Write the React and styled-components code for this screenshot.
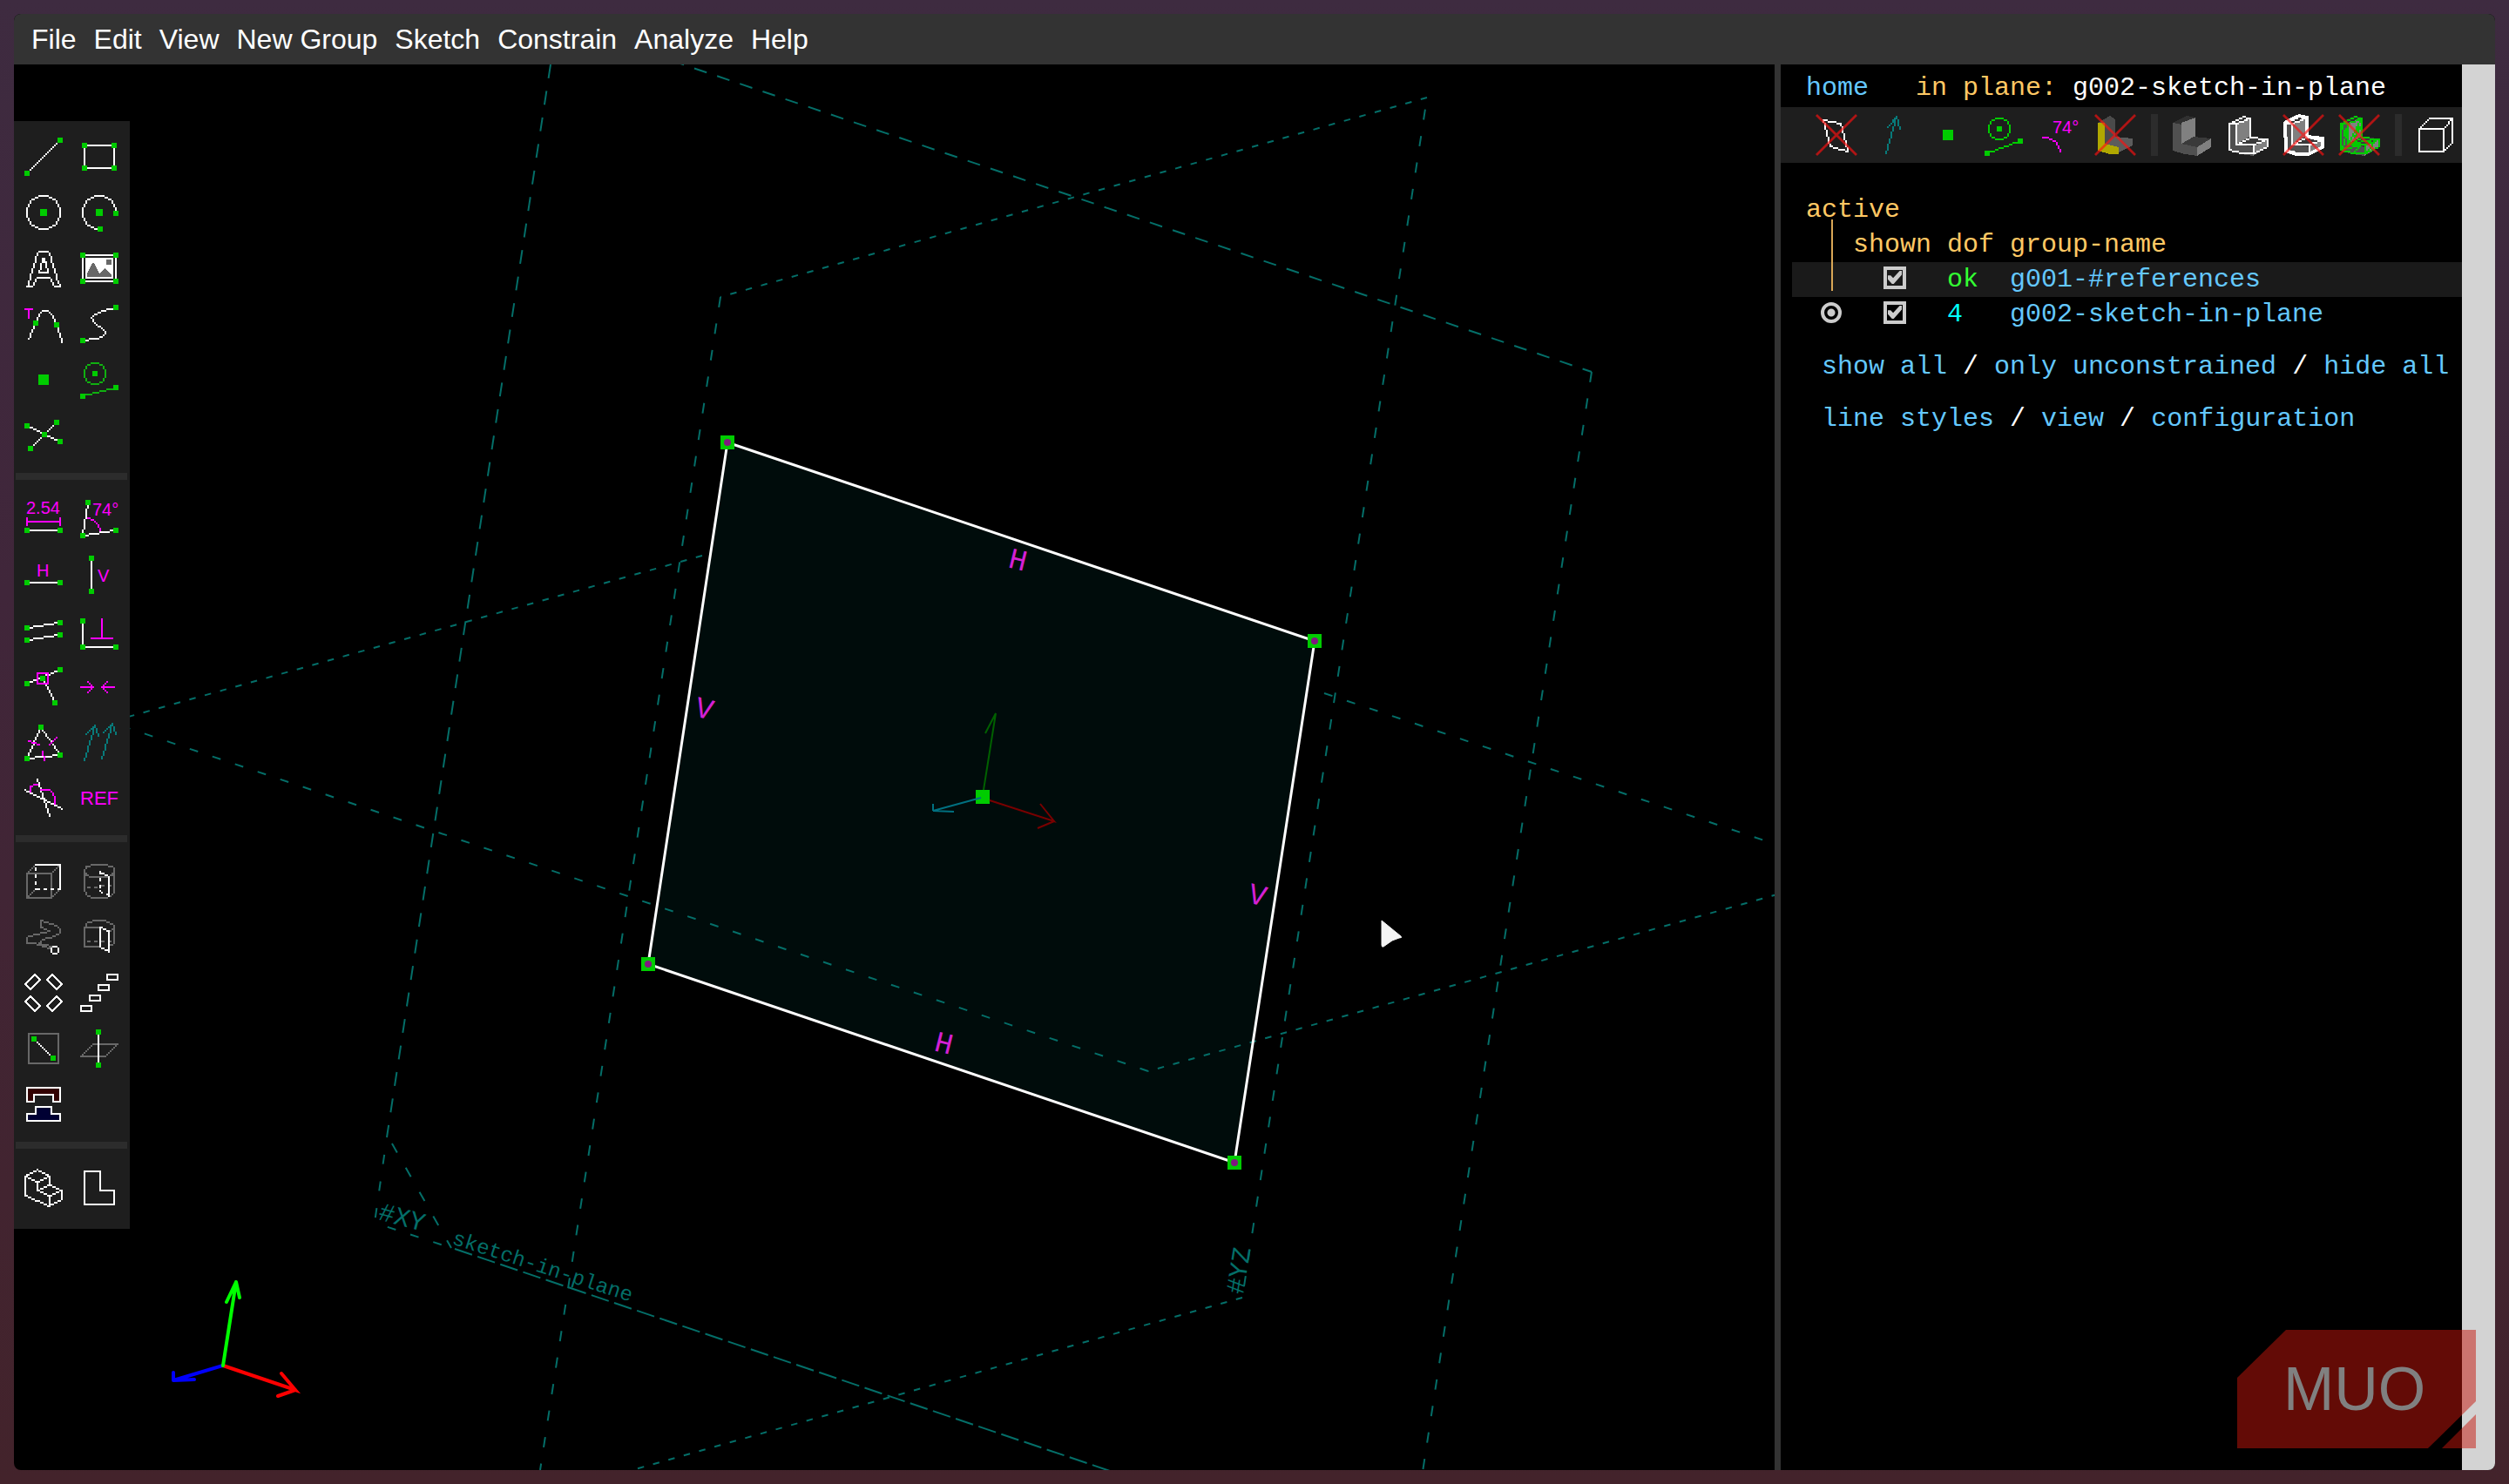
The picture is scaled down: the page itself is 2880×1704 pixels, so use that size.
import styled, { createGlobalStyle } from "styled-components";

const WHITE = "#ffffff";
const GREEN = "#00cc00";
const PINK = "#ff00ff";
const GRAY = "#686868";
const TEAL = "#087a7a";
const PLANE = "#046e68";

// every grid cell a straight line passes through
const lineCells = ([x0, y0], [x1, y1]) => {
  const steps = Math.max(Math.abs(x1 - x0), Math.abs(y1 - y0), 1);
  return Array.from({ length: steps + 1 }, (_, i) => [
    Math.round(x0 + ((x1 - x0) * i) / steps),
    Math.round(y0 + ((y1 - y0) * i) / steps),
  ]);
};

const ringCells = (cx, cy, r, from, to) => {
  const cells = [];
  const start = Number.isInteger(cx) ? 0 : 0.5;
  for (let d = start; d <= r * 0.72; d += 1) {
    const e = Math.sqrt(r * r - d * d);
    const far = Math.round(e - start) + start;
    [-1, 1].forEach((a) =>
      [-1, 1].forEach((b) => {
        cells.push([cx + a * d, cy + b * far], [cx + a * far, cy + b * d]);
      }),
    );
  }
  return cells.filter(([x, y]) => {
    const angle = (Math.atan2(y - cy, x - cx) * 180) / Math.PI;
    return angle >= from && angle <= to;
  });
};

const Cells = ({ cells, c }) => (
  <path fill={c} d={cells.map(([x, y]) => `M${x} ${y}h1v1h-1z`).join("")} />
);

const Line = ({ p, c = WHITE, dash, closed }) => {
  const points = p.split(" ").map((pair) => pair.split(",").map(Number));
  if (closed) points.push(points[0]);
  const cells = points
    .slice(1)
    .flatMap((point, i) => lineCells(points[i], point));
  return (
    <Cells
      c={c}
      cells={dash ? cells.filter((_, i) => i % 4 < 2) : cells}
    />
  );
};

const Ring = ({ x, y, r, c = WHITE, from = -180, to = 180 }) => (
  <Cells c={c} cells={ringCells(x, y, r, from, to)} />
);

const Dots = ({ p, c = GREEN }) =>
  p.split(" ").map((pair) => {
    const [x, y] = pair.split(",").map(Number);
    return (
      <rect key={pair} x={x - 1} y={y - 1} width="3" height="3" fill={c} />
    );
  });

const Mark = ({ x, y, size = 10, children }) => (
  <IconText x={x} y={y} fontSize={size}>
    {children}
  </IconText>
);

const Cross = () => (
  <path
    d="M0.5 0.5 23.5 23.5M23.5 0.5 0.5 23.5"
    stroke="#ff1010"
    strokeOpacity="0.65"
    strokeWidth="1.4"
    shapeRendering="auto"
  />
);

const Bracket = () => (
  <>
    <path fill="#505050" d="M1 5 6 6v11l9 2v5l-7-1-7-2z" />
    <path fill="#303030" d="M1 5 9 1l5 1-8 4z" />
    <path fill="#808080" d="M6 5 14 2v11l-8 4z" />
    <path fill="#3a3a3a" d="M6 17l7-4 10 1-8 5z" />
    <path fill="#808080" d="M15 19l8-5v5l-8 5z" />
  </>
);

const BracketEdges = ({ c }) => (
  <>
    <Line c={c} p="1,5 9,1 13,2 13,13" />
    <Line c={c} p="1,5 5,5 13,2" />
    <Line c={c} p="1,5 1,20 8,22 15,22 23,18 23,14 13,13 5,17 5,5" />
    <Line c={c} p="5,17 15,17 23,14" />
    <Line c={c} p="15,17 15,22" />
  </>
);

const drawTools = [
  ["Line segment", <><Line p="2,21 21,2" /><Dots p="2,21 21,2" /></>],
  ["Rectangle", <><Line closed p="3,5 20,5 20,18 3,18" /><Dots p="3,5 20,5 20,18 3,18" /></>],
  ["Circle", <><Ring x={11.5} y={11.5} r={9.6} /><rect x="10" y="10" width="4" height="4" fill={GREEN} /></>],
  ["Arc", <><Ring x={11.5} y={11.5} r={9.6} from={-180} to={0} /><Ring x={11.5} y={11.5} r={9.6} from={90} to={180} /><rect x="10" y="10" width="4" height="4" fill={GREEN} /><Dots p="21,12 12,21" /></>],
  ["Text in TrueType font", <><Line closed p="2,22 5,22 8,17 15,17 18,22 21,22 20,20 15,3 14,2 9,2 8,3 3,20" /><Line closed p="11,6 9,14 14,14 12,6" /><rect x="11" y="6" width="2" height="3" fill={WHITE} /></>],
  ["Image", <><Line closed p="2,4 21,4 21,19 2,19" /><rect x="4" y="6" width="16" height="12" fill={WHITE} /><path fill={GRAY} d="M5 17v-2l3-6h1l3 6 3-3 4 4v1zM16 7h3v3h-3z" /><Dots p="2,4 21,4 21,19 2,19" /></>],
  ["Tangent arc", <><Line p="3,20 4,18 7,10 9,6 11,4 14,4 16,6 19,12 21,18 22,22" /><Line c={PINK} p="1,3 5,3" /><Line c={PINK} p="3,3 3,8" /><Dots p="7,11 19,12" /></>],
  ["Cubic spline", <><Line p="21,2 14,4 9,6 7,8 8,10 14,15 15,17 13,19 9,20 2,21" /><Dots p="21,2 2,21" /></>],
  ["Datum point", <rect x="9" y="9" width="6" height="6" fill={GREEN} />],
  ["Toggle construction", <><Ring c="#10b010" x={9} y={8} r={6.2} /><Line c="#10b010" p="2,21 21,16" /><Dots p="9,8 2,21 21,16" /></>],
  ["Split curves", <><Line p="2,6 21,15" /><Line p="4,19 19,4" /><Dots p="2,6 19,4 12,11 21,15 4,19" /></>],
];

const constrainTools = [
  ["Distance", <><Mark x="2" y="9">2.54</Mark><Line c={PINK} p="2,13 21,13" /><Line c={PINK} p="2,11 2,15" /><Line c={PINK} p="21,11 21,15" /><Line p="2,18 21,18" /><Dots p="2,18 21,18" /></>],
  ["Angle", <><Line p="5,2 2,21 21,18" /><Ring c={PINK} x={2} y={21} r={10.6} from={-74} to={-12} /><Mark x="8" y="10">74°</Mark><Dots p="5,2 2,21 21,18" /></>],
  ["Horizontal", <><Mark x="8" y="13">H</Mark><Line p="2,16 21,16" /><Dots p="2,16 21,16" /></>],
  ["Vertical", <><Line p="7,2 7,21" /><Mark x="11" y="16">V</Mark><Dots p="7,2 7,21" /></>],
  ["Parallel", <><Line p="2,10 21,7" /><Line p="2,17 21,14" /><Dots p="2,10 21,7 2,17 21,14" /></>],
  ["Perpendicular", <><Line p="2,6 2,21 21,21" /><Line c={PINK} p="13,5 13,16" /><Line c={PINK} p="7,16 19,16" /><Dots p="2,6 2,21 21,21" /></>],
  ["Point on line", <><Line p="2,10 21,2" /><Line p="11,7 18,21" /><Line closed c={PINK} p="8,4 14,4 14,10 8,10" /><Dots p="2,10 21,2 11,7 18,21" /></>],
  ["Symmetric", <><Line c={PINK} p="1,12 8,12" /><Line c={PINK} p="5,9 8,12 5,15" /><Line c={PINK} p="20,12 13,12" /><Line c={PINK} p="16,9 13,12 16,15" /></>],
  ["Equal length", <><Line closed p="10,3 2,21 21,19" /><Line c={PINK} p="3,11 9,13" /><Line c={PINK} p="15,13 19,9" /><Line c={PINK} p="11,17 12,22" /><Dots p="10,3 2,21 21,19" /></>],
  ["Same orientation", <><Line c={TEAL} p="3,22 9,2" /><Line c={TEAL} p="4,7 9,2 11,8" /><Line c={TEAL} p="13,21 19,1" /><Line c={TEAL} p="14,6 19,1 21,7" /></>],
  ["Other supplementary angle", <><Line p="1,7 22,18" /><Line p="8,1 15,22" /><Line c={PINK} p="4,8 4,5 6,4 8,4" /><Line c={PINK} p="10,7 15,7 18,11 18,15" /></>],
  ["Toggle reference dimension", <Mark x="1" y="16" size={11}>REF</Mark>],
];

const groupTools = [
  ["Extrude", <><Line closed c={GRAY} p="2,7 16,7 16,21 2,21" /><Line c={GRAY} p="2,7 7,2" /><Line c={GRAY} p="16,7 21,2" /><Line c={GRAY} p="2,21 7,16" /><Line c={GRAY} p="16,21 21,16" /><Line p="7,2 21,2 21,16" /><Line dash p="7,4 7,16" /><Line dash p="8,16 21,16" /></>],
  ["Lathe", <><Line closed c={GRAY} p="3,5 4,3 8,2 15,2 19,3 20,5 19,8 15,9 8,9 4,8" /><Line c={GRAY} p="3,5 3,17 5,20 9,21 15,21 19,19 20,17 20,5" /><Line c={GRAY} dash p="5,15 18,14" /><Line p="12,6 17,9 17,20" /><Line dash p="12,6 12,17 17,20" /></>],
  ["Helix", <><Line c={GRAY} p="10,2 19,5 21,7 21,9 18,11 11,13 9,15 17,17" /><Line c={GRAY} p="10,2 10,6 15,8 3,11 2,12 2,15 6,15 15,18" /><Line closed p="17,17 19,17 20,18 20,20 19,21 17,21 16,20 16,18" /></>],
  ["Revolve", <><Line c={GRAY} p="12,6 3,6 5,3 9,2 14,2 19,4 20,6 20,15 17,17" /><Line c={GRAY} p="3,6 3,17 12,17" /><Line c={GRAY} p="17,9 20,6" /><Line c={GRAY} dash p="5,14 20,14" /><Line closed p="12,6 17,8 17,20 12,17" /></>],
  ["Step rotating", <g fill="none" stroke={WHITE} strokeWidth="1.2"><path d="M1.5 7 7 1.5 10 4.5 4.5 10zM22.5 7 17 1.5 14 4.5 19.5 10zM1.5 17 7 22.5 10 19.5 4.5 14zM22.5 17 17 22.5 14 19.5 19.5 14z" /></g>],
  ["Step translating", <><Line closed p="16,1 22,1 22,4 16,4" /><Line closed p="11,7 17,7 17,10 11,10" /><Line closed p="6,13 12,13 12,16 6,16" /><Line closed p="1,19 7,19 7,22 1,22" /></>],
  ["Sketch in workplane", <><Line closed c={GRAY} p="3,3 20,3 20,20 3,20" /><Line p="6,6 17,17" /><Dots p="6,6 17,17" /></>],
  ["Sketch in 3d", <><Line closed c={GRAY} p="8,9 22,9 15,16 1,16" /><Line p="11,2 11,21" /><Dots p="11,2 11,21" /></>],
  ["Link / assemble", <><path fill="#330000" d="M2 2h20v8h-4V6H6v4H2z" /><path fill="#000033" d="M7 13h10v4h5v5H2v-5h5z" /><Line closed p="2,2 21,2 21,10 17,10 17,6 6,6 6,10 2,10" /><Line closed p="7,13 16,13 16,17 21,17 21,21 2,21 2,17 7,17" /></>],
];

const viewTools = [
  ["Nearest isometric view", <><Line closed p="8,1 1,5 8,8 15,5" /><Line p="1,5 1,16 15,22 22,18 22,13" /><Line p="8,8 8,13" /><Line p="15,5 15,10" /><Line closed p="15,10 22,13 15,16 8,13" /><Line p="15,16 15,22" /></>],
  ["Align view to workplane", <Line closed p="3,2 12,2 12,13 20,13 20,21 3,21" />],
];

const toolSections = [drawTools, constrainTools, groupTools, viewTools];

const showTools = [
  [
    ["Workplanes", <><Line closed p="4,3 14,5 18,21 8,18" /><Cross /></>],
    ["Normals", <><Line c={TEAL} p="8,22 14,1" /><Line c={TEAL} p="9,7 14,1 16,8" /></>],
    ["Points", <rect x="9" y="9" width="6" height="6" fill={GREEN} />],
    ["Construction", <><Ring c={GREEN} x={9} y={8} r={6.2} /><Line c={GREEN} p="2,22 21,15" /><Dots p="9,8 2,22 21,15" /></>],
    ["Constraints", <><Line c={PINK} p="2,13 5,13 9,15 11,18 12,21" /><Mark x="8" y="11">74°</Mark></>],
    ["Faces", <><path fill="#4a4a4a" d="M2 5 9 1l3 2v10l-6 4V6z" /><path fill="#5c5c5c" d="M6 17l6-4 10 1v4l-8 4z" /><path fill="#b0a800" d="M2 5h4v12l8 2v4H9l-7-2z" /><Cross /></>],
  ],
  [
    ["Shaded", <Bracket />],
    ["Edges", <><Bracket /><BracketEdges c={WHITE} /></>],
    ["Outlines", <><Bracket /><path fill="none" stroke={WHITE} strokeWidth="2" d="M1.5 5 9.5 1 14 2v11l9 1v5l-8 4H8l-6-2z" /><BracketEdges c={WHITE} /><Cross /></>],
    ["Mesh", <><Bracket /><BracketEdges c={GREEN} /><Line c={GREEN} p="2,20 5,6 3,12 2,5" /><Line c={GREEN} p="6,16 12,3 9,13 13,6" /><Line c={GREEN} p="2,19 12,18 8,22" /><Line c={GREEN} p="9,16 22,14 16,21" /><Cross /></>],
  ],
  [
    ["Occluded lines", <><Line closed p="2,8 16,8 16,21 2,21" /><Line p="2,8 8,2 21,2 21,16 16,21" /><Line p="16,8 21,2" /></>],
  ],
];

const groups = [
  { name: "g001-#references", dof: "ok", color: "#33ff33", active: false },
  { name: "g002-sketch-in-plane", dof: "4", color: "#00ffff", active: true },
];

const menus = ["File", "Edit", "View", "New Group", "Sketch", "Constrain", "Analyze", "Help"];

const Tool = ({ label, art }) => (
  <ToolButton aria-label={label}>
    <ToolIcon viewBox="0 0 24 24">{art}</ToolIcon>
  </ToolButton>
);

const Sketch = () => (
  <SketchCanvas viewBox="16 74 2021 1614" preserveAspectRatio="xMinYMin slice">
    <polygon points="835,508 1509,736 1417,1335 744,1107" fill="#000c0b" />
    <g fill="none" stroke={PLANE} strokeWidth="2">
      <path d="M1827 427 775 71" strokeDasharray="15 12.6" strokeDashoffset="4" />
      <path d="M1827 427 1633 1690" strokeDasharray="12 18.8" />
      <path d="M632 74 444 1306" strokeDasharray="16 14.8" />
      <path d="M444 1306 430 1404" strokeDasharray="11 20" strokeDashoffset="11" />
      <path d="M430 1404 518 1433" strokeDasharray="10 17.6" strokeDashoffset="12" />
      <path d="M446 1306 518 1433" strokeDasharray="12 20" strokeDashoffset="24" />
      <path d="M522 1434 1277 1690" strokeDasharray="21 6.6" />
      <path d="M1638 112 827 341" strokeDasharray="7.5 10.8" />
      <path d="M827 341 620 1688" strokeDasharray="12 18.8" />
      <path d="M1638 112 1426 1490" strokeDasharray="12 18.8" strokeDashoffset="17" />
      <path d="M1426 1490 715 1691" strokeDasharray="7.5 10.8" />
      <path d="M806 638 126 829" strokeDasharray="7.5 10.8" />
      <path d="M1318 1230 126 829" strokeDasharray="10 17.4" />
      <path d="M1318 1230 2040 1027" strokeDasharray="7.5 10.8" strokeDashoffset="7" />
      <path d="M1520 796 2040 970" strokeDasharray="10 17.4" />
    </g>
    <polygon
      points="835,508 1509,736 1417,1335 744,1107"
      fill="none"
      stroke={WHITE}
      strokeWidth="3"
    />
    {[[835, 508], [1509, 736], [1417, 1335], [744, 1107]].map(([x, y]) => (
      <g key={x}>
        <rect x={x - 8} y={y - 8} width="16" height="16" fill={GREEN} />
        <circle cx={x} cy={y} r="4" fill="#801880" />
      </g>
    ))}
    <rect x="1120" y="907" width="16" height="16" fill={GREEN} />
    <g fill="none" strokeWidth="2">
      <path stroke="#006000" d="M1129 907 1143 819 1131 842" />
      <path stroke="#007080" d="M1126 916 1071 931 1095 932M1071 931v-8" />
      <path stroke="#780000" d="M1136 919 1210 943 1194 923M1210 943 1191 951" />
    </g>
    <g fill="none" strokeWidth="4" strokeLinecap="round">
      <path stroke="#0000ff" d="M256 1568 199 1585 223 1584M199 1585v-9" />
      <path stroke="#ff0000" d="M256 1568 339 1596 323 1577M339 1596 319 1603" />
      <path stroke="#00ff00" d="M256 1568 271 1472 260 1495M271 1472 275 1490" />
    </g>
    <SketchText fill="#d420d4" fontSize="34" transform="translate(1156 651) rotate(14)">H</SketchText>
    <SketchText fill="#d420d4" fontSize="34" transform="translate(1071 1206) rotate(14)">H</SketchText>
    <SketchText fill="#d420d4" fontSize="34" transform="translate(796 822) rotate(14)">V</SketchText>
    <SketchText fill="#d420d4" fontSize="34" transform="translate(1431 1036) rotate(14)">V</SketchText>
    <SketchText fill={PLANE} fontSize="30" transform="translate(433 1400) rotate(15)">#XY</SketchText>
    <SketchText fill={PLANE} fontSize="24" transform="translate(518 1428) rotate(18)">sketch-in-plane</SketchText>
    <SketchText fill={PLANE} fontSize="30" transform="translate(1427 1487) rotate(-81)">#YZ</SketchText>
    <path
      d="M1586 1057 1608 1075Q1610 1077 1606 1077L1598 1080 1588 1087Q1586 1088 1586 1085Z"
      fill="#f4f4f4"
      stroke="#f4f4f4"
      strokeLinejoin="round"
    />
  </SketchCanvas>
);

const Watermark = () => (
  <WatermarkArt viewBox="0 0 280 140">
    <g fill="#c5160c" fillOpacity="0.5">
      <path d="M56 0H274V82L219 136H0V55z" />
      <path d="M274 97V136H235z" />
    </g>
    <text x="53" y="92" fill="#808080" fontFamily="Liberation Sans" fontSize="70">
      MUO
    </text>
  </WatermarkArt>
);

const App = () => {
  return (
    <>
      <GlobalStyle />
      <Desktop>
        <Window>
          <MenuBar>
            {menus.map((menu) => (
              <MenuButton key={menu}>{menu}</MenuButton>
            ))}
          </MenuBar>
          <Workspace>
            <CanvasArea>
              <Sketch />
              <Toolbar>
                {toolSections.map((tools, i) => (
                  <ToolSection key={i}>
                    {tools.map(([label, art]) => (
                      <Tool key={label} label={label} art={art} />
                    ))}
                  </ToolSection>
                ))}
              </Toolbar>
            </CanvasArea>
            <TextWindow>
              <Crumbs>
                <TextLink href="#home">home</TextLink>
                <span>
                  <Label>in plane:</Label> g002-sketch-in-plane
                </span>
              </Crumbs>
              <ShowBar>
                {showTools.map((tools, i) => (
                  <ShowSection key={i}>
                    {tools.map(([label, art]) => (
                      <Tool key={label} label={label} art={art} />
                    ))}
                  </ShowSection>
                ))}
              </ShowBar>
              <GroupTable>
                <thead>
                  <tr>
                    <ActiveHead colSpan={4}>active</ActiveHead>
                  </tr>
                  <tr>
                    <HeadCell $width={70} />
                    <HeadCell $width={108}>shown</HeadCell>
                    <HeadCell $width={72}>dof</HeadCell>
                    <HeadCell>group-name</HeadCell>
                  </tr>
                </thead>
                <tbody>
                  {groups.map(({ name, dof, color, active }, i) => (
                    <GroupRow key={name} $shaded={i % 2 === 0}>
                      <td>
                        {active && (
                          <Radio name="active" aria-label={`activate ${name}`} defaultChecked />
                        )}
                      </td>
                      <td>
                        <Check aria-label={`show ${name}`} defaultChecked />
                      </td>
                      <td>
                        <TextLink href="#dof" $color={color}>
                          {dof}
                        </TextLink>
                      </td>
                      <td>
                        <TextLink href={`#${name}`}>{name}</TextLink>
                      </td>
                    </GroupRow>
                  ))}
                </tbody>
              </GroupTable>
              <LinkLines>
                <div>
                  <TextLink href="#all">show all</TextLink> /{" "}
                  <TextLink href="#unconstrained">only unconstrained</TextLink> /{" "}
                  <TextLink href="#hide">hide all</TextLink>
                </div>
                <div>
                  <TextLink href="#styles">line styles</TextLink> /{" "}
                  <TextLink href="#view">view</TextLink> /{" "}
                  <TextLink href="#configuration">configuration</TextLink>
                </div>
              </LinkLines>
            </TextWindow>
            <ScrollTrack />
          </Workspace>
          <Watermark />
        </Window>
      </Desktop>
    </>
  );
};
export default App;

const GlobalStyle = createGlobalStyle`
  * {
    box-sizing: border-box;
  }
  body {
    margin: 0;
    background-color: #40242e;
  }
`;
const Desktop = styled.div`
  height: 100vh;
  padding: 16px;
  background: linear-gradient(#3e2b40, #40263a 40%, #43232b);
`;
const Window = styled.div`
  position: relative;
  display: flex;
  flex-direction: column;
  height: 100%;
  border-radius: 8px;
  overflow: hidden;
  background-color: black;
`;
const MenuBar = styled.nav`
  display: flex;
  align-items: center;
  gap: 20px;
  height: 58px;
  padding-left: 20px;
  background-color: #333333;
`;
const MenuButton = styled.button`
  padding: 0;
  border: none;
  background: none;
  color: white;
  font-family: "Liberation Sans", sans-serif;
  font-size: 32px;
  line-height: 40px;
`;
const Workspace = styled.div`
  display: flex;
  flex: 1;
  min-height: 0;
`;
const CanvasArea = styled.main`
  display: grid;
  grid-template: minmax(0, 1fr) / minmax(0, 1fr);
  flex: 1;
  min-width: 0;
  overflow: hidden;
`;
const SketchCanvas = styled.svg`
  grid-area: 1 / 1;
  width: 100%;
  height: 100%;
`;
const SketchText = styled.text`
  font-family: "Liberation Mono", monospace;
`;
const Toolbar = styled.div`
  grid-area: 1 / 1;
  place-self: start;
  z-index: 1;
  margin-top: 65px;
  padding: 9px 3px 15px 2px;
  background-color: #1e1e1e;
`;
const ToolSection = styled.div`
  display: grid;
  grid-template-columns: 64px 64px;

  & + & {
    margin-top: 11px;
    padding-top: 13px;
    border-top: 8px solid #2c2c2c;
  }
`;
const ToolButton = styled.button`
  display: flex;
  align-items: center;
  justify-content: center;
  width: 64px;
  height: 64px;
  padding: 0;
  border: none;
  background: none;
`;
const ToolIcon = styled.svg`
  width: 48px;
  height: 48px;
  shape-rendering: crispEdges;
`;
const IconText = styled.text`
  fill: #ff00ff;
  font-family: "Liberation Sans", sans-serif;
`;
const TextWindow = styled.aside`
  width: 789px;
  padding-top: 7px;
  border-left: 7px solid #333333;
  color: white;
  font-family: "Liberation Mono", monospace;
  font-size: 30px;
  line-height: 40px;
  white-space: nowrap;
`;
const Crumbs = styled.div`
  display: flex;
  gap: 54px;
  padding-left: 29px;
`;
const Label = styled.span`
  color: #ffc864;
`;
const TextLink = styled.a`
  color: ${({ $color }) => $color || "#64c8ff"};
  text-decoration: none;
`;
const ShowBar = styled.div`
  display: flex;
  height: 64px;
  margin-top: 2px;
  padding-left: 32px;
  background-color: #1e1e1e;
`;
const ShowSection = styled.div`
  display: flex;

  & + &::before {
    content: "";
    width: 8px;
    height: 48px;
    margin: 8px 7px 8px 9px;
    background-color: #2c2c2c;
  }
`;
const GroupTable = styled.table`
  width: calc(100% - 13px);
  margin: 34px 0 0 13px;
  border-collapse: collapse;

  td,
  th {
    height: 40px;
    padding: 0;
    text-align: left;
  }
`;
const HeadCell = styled.th`
  width: ${({ $width }) => ($width ? `${$width}px` : "auto")};
  color: #ffc864;
  font-weight: normal;
`;
const ActiveHead = styled.th`
  position: relative;
  color: #ffc864;
  font-weight: normal;

  &&& {
    padding-left: 16px;
  }
  &::after {
    content: "";
    position: absolute;
    top: 31px;
    left: 45px;
    width: 2px;
    height: 82px;
    background-color: #d9a656;
  }
`;
const GroupRow = styled.tr`
  background-color: ${({ $shaded }) => ($shaded ? "#1a1a1a" : "transparent")};
`;
const Radio = styled.input.attrs({ type: "radio" })`
  appearance: none;
  display: block;
  width: 24px;
  height: 24px;
  margin: 0 0 4px 33px;
  border: 4px solid #cccccc;
  border-radius: 50%;
  background: radial-gradient(#cccccc 4px, transparent 5px);
`;
const Check = styled.input.attrs({ type: "checkbox" })`
  appearance: none;
  display: block;
  width: 26px;
  height: 26px;
  margin: 0 0 4px 35px;
  padding: 1px;
  border: 4px solid #cccccc;

  &:checked::before {
    content: "";
    display: block;
    width: 16px;
    height: 15px;
    background-color: #cccccc;
    clip-path: polygon(0 35%, 20% 35%, 38% 55%, 85% 0, 100% 0, 100% 30%, 42% 100%, 30% 100%, 0 65%);
  }
`;
const LinkLines = styled.div`
  display: grid;
  gap: 20px;
  padding: 20px 0 0 47px;
`;
const ScrollTrack = styled.div`
  width: 38px;
  background-color: #d3d3d3;
`;
const WatermarkArt = styled.svg`
  position: absolute;
  right: 16px;
  bottom: 21px;
  width: 280px;
  height: 140px;
`;
